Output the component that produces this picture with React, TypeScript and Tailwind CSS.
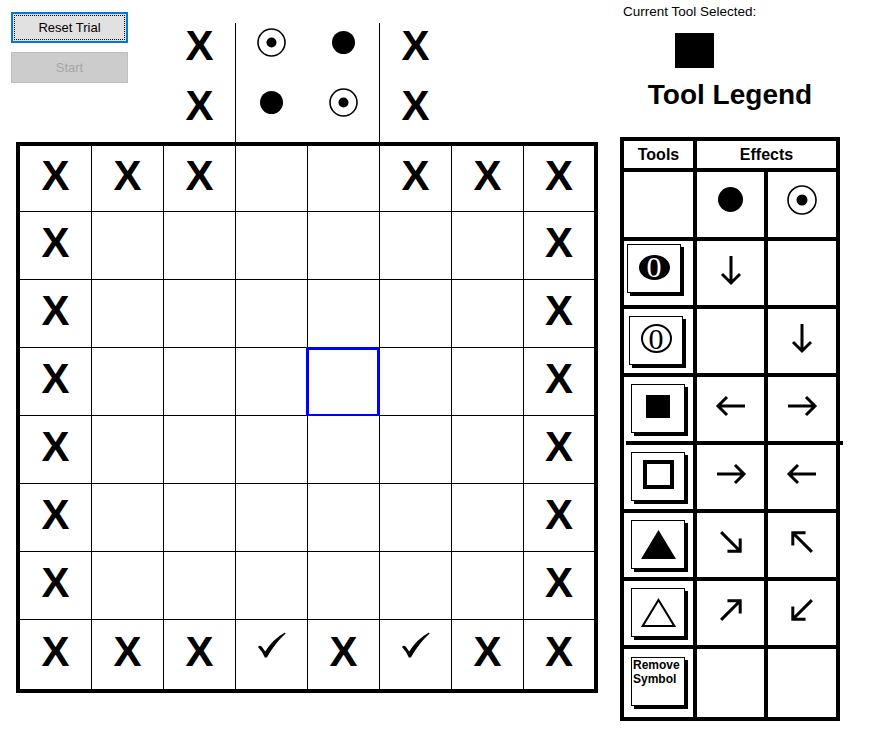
import React from 'react';

const board = [
  'XXX..XXX',
  'X......X',
  'X......X',
  'X......X',
  'X......X',
  'X......X',
  'X......X',
  'XXXcXcXX',
];

const BigX: React.FC = () => (
  <span className="font-['Liberation_Sans',Arial,sans-serif] font-bold text-[42px] leading-none">X</span>
);

const Ring: React.FC<{ size: number; dot: number }> = ({ size, dot }) => (
  <svg width={size} height={size} viewBox={`0 0 ${size} ${size}`}>
    <circle cx={size / 2} cy={size / 2} r={size / 2 - 1} fill="none" stroke="black" strokeWidth="1.6" />
    <circle cx={size / 2} cy={size / 2} r={dot / 2} fill="black" />
  </svg>
);

const Check: React.FC = () => (
  <svg width="28" height="26" viewBox="0 0 28 26">
    <path
      d="M0 15 Q2 12.5 4 15 L7.2 19.5 Q15 7 27 0.5 L27.6 1.4 Q17 11 8.8 25.5 L6.8 25.5 Q4 19 0 15 Z"
      fill="black"
    />
  </svg>
);

const Arrow: React.FC<{ angle: number }> = ({ angle }) => (
  <svg width="32" height="32" viewBox="-16 -16 32 32">
    <g transform={`rotate(${angle})`}>
      <path d="M-14 0 H12 M4 -9 L13 0 L4 9" fill="none" stroke="black" strokeWidth="3" strokeLinejoin="miter" />
    </g>
  </svg>
);

const ClueCol: React.FC<{ items: React.ReactNode[] }> = ({ items }) => (
  <div className="w-[71px] flex flex-col pt-[16px]">
    {items.map((it, i) => (
      <div key={i} className="h-[60px] flex items-center justify-center">
        {it}
      </div>
    ))}
  </div>
);

const TopArea: React.FC = () => {
  const ring = (
    <div className="pb-[8px]">
      <Ring size={29} dot={10} />
    </div>
  );
  const dot = (
    <div className="pb-[7px]">
      <div className="w-[23px] h-[23px] rounded-full bg-black" />
    </div>
  );
  return (
    <div className="flex h-[142px] pl-[11px]">
      <div className="w-[152px] flex flex-col gap-[9px] pt-[12px]">
        <button className="w-[117px] h-[31px] border-2 border-[#0078d7] bg-[#e1e1e1] p-px">
          <div className="h-full border border-dotted border-black flex items-center justify-center text-[13px]">
            Reset Trial
          </div>
        </button>
        <button className="w-[117px] h-[31px] border border-[#bfbfbf] bg-[#cccccc] text-[13px] text-[#a6a6a6]">
          Start
        </button>
      </div>
      <div className="w-px" />
      <ClueCol items={[<BigX />, <BigX />]} />
      <div className="w-px bg-black mt-[23px]" />
      <ClueCol items={[ring, dot]} />
      <div className="w-px" />
      <ClueCol items={[dot, ring]} />
      <div className="w-px bg-black mt-[23px]" />
      <ClueCol items={[<BigX />, <BigX />]} />
    </div>
  );
};

const Board: React.FC = () => (
  <div className="ml-[16px] w-[582px] border-[4px] border-black bg-black grid grid-cols-[repeat(7,71px)_70px] grid-rows-[65px_repeat(6,67px)_69px] gap-px">
    {board.map((row, r) =>
      row.split('').map((c, col) => (
        <div key={`${r}-${col}`} className="relative bg-white flex items-center justify-center">
          {c === 'X' && (
            <div className="pb-[6px]">
              <BigX />
            </div>
          )}
          {c === 'c' && (
            <div className="pb-[20px]">
              <Check />
            </div>
          )}
          {r === 3 && col === 4 && (
            <div className="absolute -top-px -left-[2px] -right-px -bottom-[2px] border-[3px] border-[#0000ff]" />
          )}
        </div>
      ))
    )}
  </div>
);

const ToolBox: React.FC<{ children: React.ReactNode; text?: boolean }> = ({ children, text }) => (
  <div
    className={
      text
        ? 'w-[54px] h-[49px] border border-black bg-white shadow-[3px_3px_0_0_#000] pl-px text-[12px] leading-[14px] font-bold'
        : 'w-[54px] h-[49px] border border-black bg-white shadow-[3px_3px_0_0_#000] flex items-center justify-center'
    }
  >
    {children}
  </div>
);

type LegendRow = {
  h: string;
  pad: string;
  fx: string;
  tool: React.ReactNode;
  a: React.ReactNode;
  b: React.ReactNode;
};

const legendRows: LegendRow[] = [
  {
    h: 'h-[65px]',
    pad: '',
    fx: 'pb-[10px]',
    tool: null,
    a: <div className="w-[25px] h-[25px] rounded-full bg-black" />,
    b: <Ring size={30} dot={11} />,
  },
  {
    h: 'h-[64px]',
    pad: 'pl-[3px] pt-[3px]',
    fx: 'pb-[6px]',
    tool: (
      <ToolBox>
        <div className="mb-[3px] w-[31px] h-[25px] rounded-[50%] bg-black text-white flex items-center justify-center font-['Liberation_Serif',serif] text-[30px] leading-none">
          0
        </div>
      </ToolBox>
    ),
    a: <Arrow angle={90} />,
    b: null,
  },
  {
    h: 'h-[64px]',
    pad: 'pl-[5px] pt-[7px]',
    fx: 'pb-[6px]',
    tool: (
      <ToolBox>
        <div className="mb-[4px] w-[31px] h-[29px] rounded-[50%] border-2 border-black flex items-center justify-center font-['Liberation_Serif',serif] text-[30px] leading-none">
          0
        </div>
      </ToolBox>
    ),
    a: null,
    b: <Arrow angle={90} />,
  },
  {
    h: 'h-[64px]',
    pad: 'pl-[7px] pt-[7px]',
    fx: 'pb-[6px]',
    tool: (
      <ToolBox>
        <div className="mb-[4px] w-[24px] h-[23px] bg-black" />
      </ToolBox>
    ),
    a: <Arrow angle={180} />,
    b: <Arrow angle={0} />,
  },
  {
    h: 'h-[64px]',
    pad: 'pl-[7px] pt-[7px]',
    fx: 'pb-[6px]',
    tool: (
      <ToolBox>
        <div className="mb-[5px] w-[31px] h-[29px] border-[4px] border-black" />
      </ToolBox>
    ),
    a: <Arrow angle={0} />,
    b: <Arrow angle={180} />,
  },
  {
    h: 'h-[64px]',
    pad: 'pl-[7px] pt-[7px]',
    fx: 'pb-[6px]',
    tool: (
      <ToolBox>
        <svg width="35" height="29" viewBox="0 0 35 29">
          <polygon points="17.5,0 35,29 0,29" fill="black" />
        </svg>
      </ToolBox>
    ),
    a: <Arrow angle={45} />,
    b: <Arrow angle={225} />,
  },
  {
    h: 'h-[64px]',
    pad: 'pl-[7px] pt-[7px]',
    fx: 'pb-[6px]',
    tool: (
      <ToolBox>
        <svg width="35" height="29" viewBox="0 0 35 29">
          <polygon points="17.5,2 33.3,28 1.7,28" fill="none" stroke="black" strokeWidth="2" />
        </svg>
      </ToolBox>
    ),
    a: <Arrow angle={-45} />,
    b: <Arrow angle={135} />,
  },
  {
    h: 'h-[68px]',
    pad: 'pl-[7px] pt-[8px]',
    fx: 'pb-[6px]',
    tool: (
      <ToolBox text>
        Remove
        <br />
        Symbol
      </ToolBox>
    ),
    a: null,
    b: null,
  },
];

const Legend: React.FC = () => (
  <div className="ml-[22px] w-[220px] flex flex-col">
    <div className="pt-[3px] pl-[3px] text-[13.5px] leading-[18px]">Current Tool Selected:</div>
    <div className="ml-[55px] mt-[12px] w-[39px] h-[35px] bg-black" />
    <div className="mt-[13px] text-center text-[28px] leading-none font-bold">Tool Legend</div>
    <div className="mt-[28px] border-[4px] border-black bg-white flex flex-col">
      <div className="grid grid-cols-[69px_139px] gap-x-[4px] bg-black h-[27px] text-[16px] font-bold">
        <div className="bg-white flex items-center justify-center">Tools</div>
        <div className="bg-white flex items-center justify-center">Effects</div>
      </div>
      {legendRows.map((row, i) => (
        <React.Fragment key={i}>
          {i === 4 ? (
            <div className="h-[4px] bg-black ml-[2px] -mr-[7px]" />
          ) : (
            <div className="h-[4px] bg-black" />
          )}
          <div className={`grid grid-cols-[69px_67px_68px] gap-x-[4px] bg-black ${row.h}`}>
            <div className={`bg-white flex items-start ${row.pad}`}>{row.tool}</div>
            <div className={`bg-white flex items-center justify-center ${row.fx}`}>{row.a}</div>
            <div className={`bg-white flex items-center justify-center ${row.fx}`}>{row.b}</div>
          </div>
        </React.Fragment>
      ))}
    </div>
  </div>
);

export default function App() {
  return (
    <div className="w-[883px] h-[734px] bg-white flex font-['Liberation_Sans',Arial,sans-serif] text-black overflow-hidden">
      <div className="flex flex-col w-[598px]">
        <TopArea />
        <Board />
      </div>
      <Legend />
    </div>
  );
}
